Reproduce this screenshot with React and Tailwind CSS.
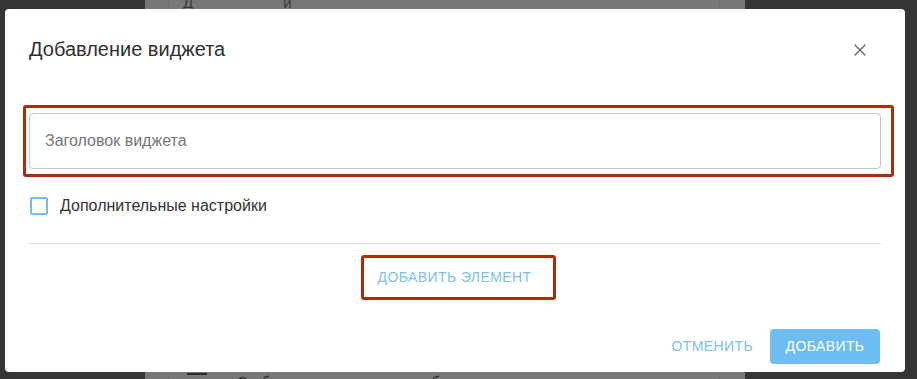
import { X } from 'lucide-react';

function Backdrop() {
  return (
    <div className="ml-[145px] w-[600px] h-full bg-[#777777] flex">
      <div className="ml-[23px] w-[552px] h-full border-x border-[#6f6f6f] flex flex-col justify-between">
        <div className="-mt-[8px] pl-[14px] flex gap-[90px] text-[15px] text-[#3a3a3a]">
          <span>Д</span>
          <span>й</span>
        </div>
        <div className="pl-[18px] flex items-start gap-[30px] h-[7px] overflow-hidden text-[14px] text-[#2a2a2a]">
          <div className="mt-[1px] w-[20px] h-[12px] border-t-2 border-[#2a2a2a]" />
          <span className="leading-[20px]">Отображает настроенные изображения и текст в качестве справки</span>
        </div>
      </div>
    </div>
  );
}

function AddWidgetDialog() {
  return (
    <div className="absolute left-[5px] top-[9px] w-[900px] h-[363px] bg-white rounded-[4px] px-6 flex flex-col">
      <div className="pt-[26px] flex items-center justify-between">
        <h2 className="text-[20px] leading-[28px] text-[#2f2f2f]">Добавление виджета</h2>
        <button className="mr-[11px] mt-[1px] text-[#6b6b6b]">
          <X size={20} strokeWidth={1.6} />
        </button>
      </div>

      <div className="mt-[42px] -ml-[6px] w-[871px] border-[3px] border-[#b02a0c] rounded-[3px] pl-[3px] pr-[10px] py-[5px]">
        <input
          placeholder="Заголовок виджета"
          className="w-full h-[56px] px-[15px] border border-[#c4c4c4] rounded-[4px] text-[16px] text-[#333] placeholder:text-[#767676] outline-none"
        />
      </div>

      <label className="mt-[13px] h-[32px] flex items-center gap-[12px] pl-[1px]">
        <span className="w-[18px] h-[18px] border-2 border-[#7bbbe8] rounded-[2px]" />
        <span className="text-[16px] text-[#333]">Дополнительные настройки</span>
      </label>

      <div className="mt-[21px] h-px bg-[#e0e0e0]" />

      <div className="mt-[11px] flex justify-center pl-[7px]">
        <div className="border-[3px] border-[#b02a0c] rounded-[3px]">
          <button className="h-[39px] pl-[14px] pr-[22px] text-[14px] tracking-[0.4px] text-[#7dbfec]">
            ДОБАВИТЬ ЭЛЕМЕНТ
          </button>
        </div>
      </div>

      <div className="mt-[29px] flex justify-end items-center gap-[1px] mr-[1px]">
        <button className="h-[35px] px-4 text-[14px] tracking-[0.4px] text-[#7dbfec]">ОТМЕНИТЬ</button>
        <button className="h-[35px] w-[110px] rounded-[4px] bg-[#6dbcf3] text-[14px] tracking-[0.4px] text-white">
          ДОБАВИТЬ
        </button>
      </div>
    </div>
  );
}

export default function App() {
  return (
    <div className="relative w-[917px] h-[379px] overflow-hidden bg-[#353535] font-['Liberation_Sans',Arial,sans-serif]">
      <Backdrop />
      <AddWidgetDialog />
    </div>
  );
}
